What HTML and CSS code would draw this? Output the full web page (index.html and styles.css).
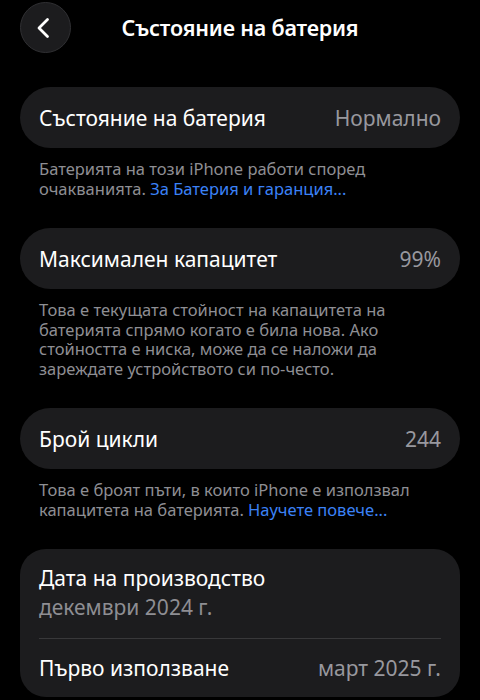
FILE: index.html
```html
<!DOCTYPE html>
<html lang="bg">
<head>
<meta charset="utf-8">
<link rel="stylesheet" href="styles.css">
</head>
<body>
<div class="screen">
  <header class="nav">
    <button class="back" aria-label="Назад">
      <svg width="22" height="22" viewBox="0 0 22 22"><path d="M14.5 2.5 L6 11 L14.5 19.5" fill="none" stroke="#fff" stroke-width="2.8" stroke-linecap="round" stroke-linejoin="round"/></svg>
    </button>
    <h1 class="title">Състояние на батерия</h1>
  </header>

  <section class="group first">
    <div class="card pill">
      <span class="label">Състояние на батерия</span>
      <span class="value">Нормално</span>
    </div>
    <p class="note">Батерията на този iPhone работи според очакванията. <span class="link">За Батерия и гаранция...</span></p>
  </section>

  <section class="group">
    <div class="card pill">
      <span class="label">Максимален капацитет</span>
      <span class="value">99%</span>
    </div>
    <p class="note">Това е текущата стойност на капацитета на батерията спрямо когато е била нова. Ако стойността е ниска, може да се наложи да зареждате устройството си по-често.</p>
  </section>

  <section class="group">
    <div class="card pill">
      <span class="label">Брой цикли</span>
      <span class="value">244</span>
    </div>
    <p class="note">Това е броят пъти, в които iPhone е използвал капацитета на батерията. <span class="link">Научете повече...</span></p>
  </section>

  <section class="group">
    <div class="card list">
      <div class="stack">
        <span class="label">Дата на производство</span>
        <span class="sub">декември 2024 г.</span>
      </div>
      <div class="divider"></div>
      <div class="row">
        <span class="label">Първо използване</span>
        <span class="value">март 2025 г.</span>
      </div>
    </div>
  </section>
</div>
</body>
</html>
```

FILE: styles.css
```css
* { box-sizing: border-box; }
html, body { margin: 0; padding: 0; background: #000; }
body {
  font-family: "Noto Sans", "Inter", "Liberation Sans", sans-serif;
  color: #fff;
  width: 480px;
  height: 700px;
  overflow: hidden;
}
.screen { padding: 2px 20px 0 20px; }
.nav {
  position: relative;
  height: 51px;
  display: flex;
  align-items: center;
  justify-content: center;
}
.back {
  position: absolute;
  left: 0;
  top: 0;
  width: 51px;
  height: 51px;
  border-radius: 50%;
  background: #1c1c1e;
  border: 1px solid #303033;
  display: flex;
  align-items: center;
  justify-content: center;
  padding: 0 3px 0 0;
}
.title {
  margin: 0;
  font-size: 21.5px;
  font-weight: 600;
  letter-spacing: -0.2px;
}
.group { margin-top: 30px; }
.group.first { margin-top: 34px; }
.card { background: #1c1c1e; }
.pill {
  height: 61px;
  border-radius: 31px;
  display: flex;
  align-items: center;
  justify-content: space-between;
  padding: 0 19px;
}
.label { font-size: 21px; color: #fff; }
.value { font-size: 21px; color: #98989e; }
.note {
  margin: 11px 0 0 0;
  padding: 0 19px;
  font-size: 16.5px;
  line-height: 19.5px;
  color: #8e8e93;
}
.link { color: #3b82f7; }
.list {
  border-radius: 26px;
  padding: 0 19px;
  height: 148px;
}
.stack {
  display: flex;
  flex-direction: column;
  padding-top: 15px;
  height: 89px;
  gap: 1px;
}
.sub { font-size: 21px; color: #8e8e93; }
.divider { height: 1px; background: #38383a; }
.row {
  height: 58px;
  display: flex;
  align-items: center;
  justify-content: space-between;
}
```
